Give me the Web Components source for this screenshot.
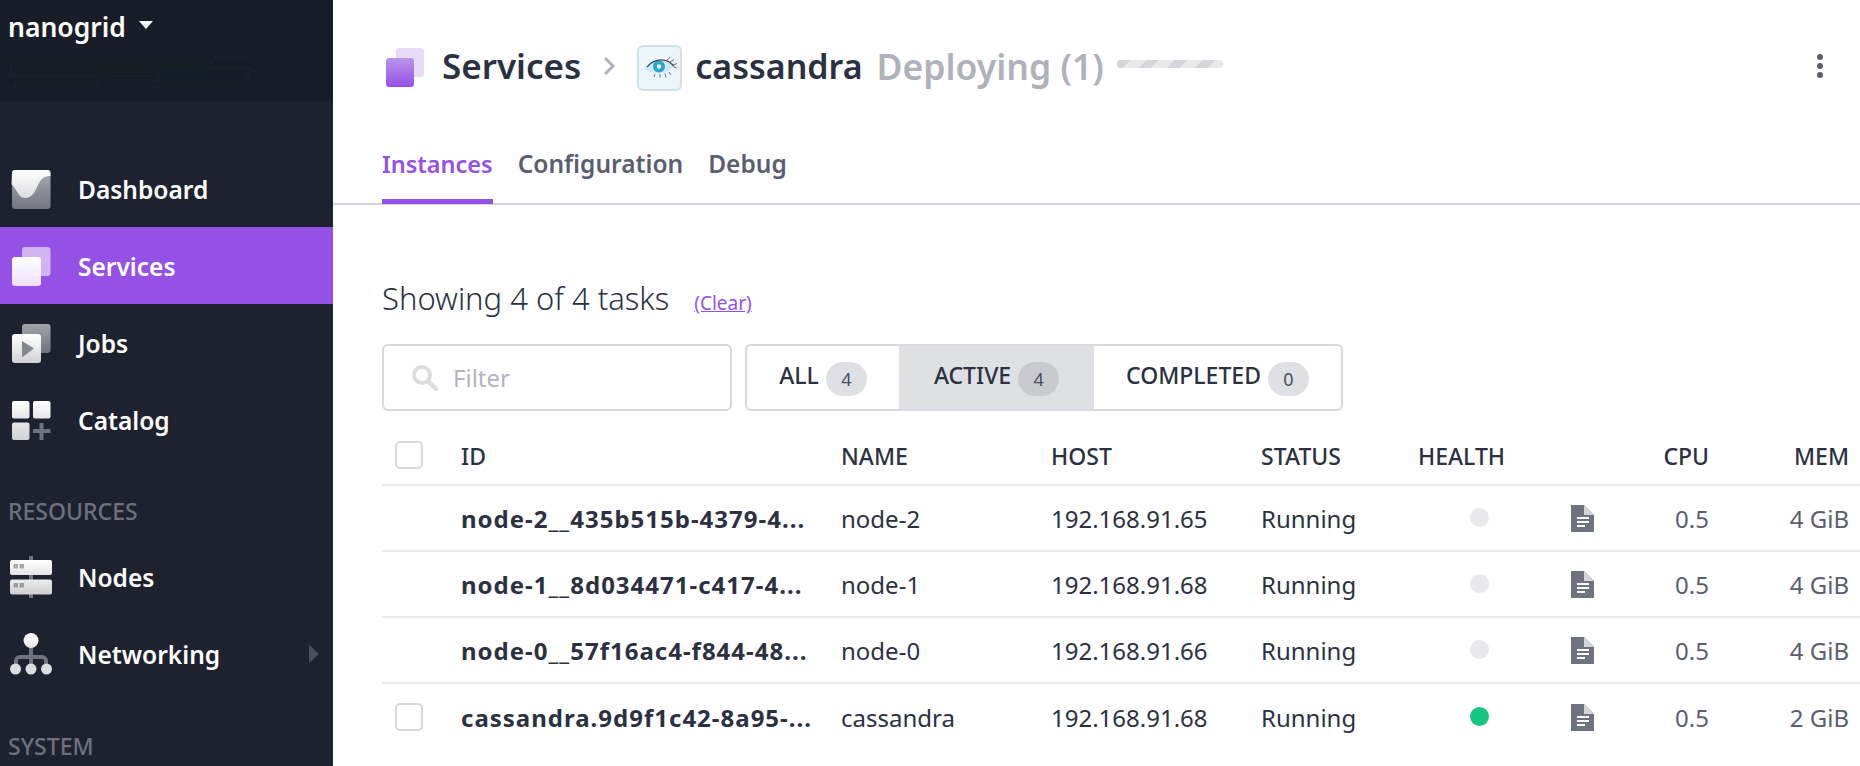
<!DOCTYPE html>
<html>
<head>
<meta charset="utf-8">
<title>Services</title>
<style>
  html, body { margin: 0; height: 100%; overflow: hidden; background: #fff; }
  body { font-family: "Noto Sans", "Open Sans", sans-serif; color: #2c3142; }
</style>
</head>
<body>
<app-shell>
  <side-nav slot="nav"></side-nav>
  <service-page></service-page>
</app-shell>

<script>
// icons are plain svg strings, all on a 42x42 box
const defs = (id, a, b) => `<defs><linearGradient id="${id}" x1="0" y1="0" x2="0" y2="1"><stop offset="0" stop-color="${a}"/><stop offset="1" stop-color="${b}"/></linearGradient></defs>`;

const ICONS = {
  dashboard: `<svg width="42" height="42" viewBox="0 0 42 42">${defs('d1', '#a9abb0', '#73767f')}${defs('d2', '#ffffff', '#dcdde0')}
    <rect x="2" y="2" width="38.500" height="39" rx="3" fill="url(#d1)"/>
    <path d="M2 5a3 3 0 0 1 3-3h32.500a3 3 0 0 1 3 3v3c-6 0-9 2-12 8-3 7-6 14-13.500 14-5 0-7-5-9-8-2-3-3-5-4.500-5.500z" fill="url(#d2)"/></svg>`,
  services: `<svg width="42" height="42" viewBox="0 0 42 42">${defs('s1', '#ffffff', '#eddffb')}
    <rect x="12" y="2" width="28.500" height="29" rx="3" fill="#d2b4f2"/>
    <rect x="2" y="12" width="29" height="29" rx="3" fill="url(#s1)"/></svg>`,
  jobs: `<svg width="42" height="42" viewBox="0 0 42 42">${defs('j1', '#a2a4aa', '#6f727c')}${defs('j2', '#ffffff', '#d2d3d6')}
    <rect x="12" y="2" width="28.500" height="29" rx="3" fill="url(#j1)"/>
    <rect x="2" y="12" width="29" height="29" rx="3" fill="url(#j2)"/>
    <path d="M12 19l12 7.500-12 9z" fill="#85878f"/></svg>`,
  catalog: `<svg width="42" height="42" viewBox="0 0 42 42">${defs('c1', '#ffffff', '#e6e6e9')}${defs('c2', '#e8e8ea', '#cfd0d3')}
    <rect x="2" y="2" width="17.500" height="17.500" rx="2" fill="url(#c1)"/>
    <rect x="23" y="2" width="17.500" height="17.500" rx="2" fill="url(#c1)"/>
    <rect x="2" y="23.500" width="17.500" height="17.500" rx="2" fill="url(#c2)"/>
    <path d="M29.500 24h4v6h7v4h-7v7h-4v-7h-6.500v-4h6.500z" fill="#70737e"/></svg>`,
  nodes: `<svg width="42" height="42" viewBox="0 0 42 42">${defs('n1', '#ffffff', '#e4e4e7')}${defs('n2', '#ececee', '#cfd0d3')}
    <rect x="19" y="0" width="4" height="42" fill="#70737e"/>
    <rect x="0" y="4" width="42" height="15" rx="2" fill="url(#n1)"/>
    <rect x="0" y="23.500" width="42" height="15" rx="2" fill="url(#n2)"/>
    <rect x="3.500" y="8" width="4.500" height="4.500" fill="#a8a9ae"/><rect x="9.500" y="8" width="4.500" height="4.500" fill="#a8a9ae"/>
    <rect x="3.500" y="27" width="4.500" height="4.500" fill="#9c9da3"/><rect x="9.500" y="27" width="4.500" height="4.500" fill="#9c9da3"/></svg>`,
  networking: `<svg width="42" height="42" viewBox="0 0 42 42">${defs('w1', '#ffffff', '#e7e7ea')}
    <path d="M6 33v-5a4 4 0 0 1 4-4h22a4 4 0 0 1 4 4v5M21 12v21" fill="none" stroke="#70737e" stroke-width="4"/>
    <circle cx="21" cy="7.500" r="7.500" fill="url(#w1)"/>
    <circle cx="5.500" cy="36" r="5.500" fill="#dcdde0"/><circle cx="21" cy="36" r="5.500" fill="#dcdde0"/><circle cx="36.500" cy="36" r="5.500" fill="#dcdde0"/></svg>`
};

class AppShell extends HTMLElement {
  constructor() {
    super();
    this.attachShadow({ mode: 'open' });
    this.shadowRoot.innerHTML = `
      <style>
        :host { display: flex; width: 100%; height: 766px; overflow: hidden; }
        ::slotted(side-nav) { flex: 0 0 333px; }
        .main { flex: 1; min-width: 0; display: flex; }
      </style>
      <slot name="nav"></slot>
      <div class="main"><slot></slot></div>
    `;
  }
}

class SideNav extends HTMLElement {
  constructor() {
    super();
    this.attachShadow({ mode: 'open' });
  }
  connectedCallback() {
    this.shadowRoot.innerHTML = `
      <style>
        :host { display: block; background: #1e222f; height: 766px; overflow: hidden; color: #fff; }
        .top { height: 101px; background: #191d28; box-sizing: border-box; padding: 8px 8px 0; }
        .cluster { display: flex; align-items: center; gap: 13px; font-size: 26.500px; font-weight: 600; line-height: 38px; height: 38px; }
        .caret { width: 0; height: 0; border: 7px solid transparent; border-top: 8px solid #fff; border-bottom: 0; margin-top: -4px; }
        .smudge { display: block; margin-top: 6px; }
        .items { padding-top: 49px; }
        .label { font-size: 23px; font-weight: 500; color: #6d717e; line-height: 30px; padding-left: 8px; }
        .label.res { margin-top: 38px; margin-bottom: 12px; }
        .label.sys { margin-top: 39px; }
      </style>
      <div class="top">
        <div class="cluster"><span>nanogrid</span><span class="caret"></span></div>
        <svg class="smudge" width="260" height="36" viewBox="0 0 260 36" aria-hidden="true">
          <defs><filter id="b"><feGaussianBlur stdDeviation="3.500"/></filter></defs>
          <g filter="url(#b)" fill="#171b24"><rect x="2" y="6" width="200" height="6"/><rect x="4" y="16" width="240" height="6"/><rect x="4" y="26" width="90" height="4"/><rect x="150" y="24" width="90" height="6"/></g>
        </svg>
      </div>
      <div class="items">
        <nav-item icon="dashboard">Dashboard</nav-item>
        <nav-item icon="services" active>Services</nav-item>
        <nav-item icon="jobs">Jobs</nav-item>
        <nav-item icon="catalog">Catalog</nav-item>
        <div class="label res">RESOURCES</div>
        <nav-item icon="nodes">Nodes</nav-item>
        <nav-item icon="networking" more>Networking</nav-item>
        <div class="label sys">SYSTEM</div>
      </div>
    `;
  }
}

class NavItem extends HTMLElement {
  constructor() {
    super();
    this.attachShadow({ mode: 'open' });
  }
  connectedCallback() {
    this.shadowRoot.innerHTML = `
      <style>
        :host { display: flex; align-items: center; height: 77px; padding-left: 10px; font-size: 24.500px; font-weight: 600; color: #fff; position: relative; }
        :host([active]) { background: #9551e6; }
        .ic { width: 42px; height: 42px; margin-right: 26px; }
        .tx { padding-top: 2px; }
        svg { display: block; }
        .more { position: absolute; right: 14px; top: 30px; width: 0; height: 0; border: 9px solid transparent; border-left: 10px solid #4b4f5c; border-right: 0; }
      </style>
      <span class="ic">${ICONS[this.getAttribute('icon')]}</span>
      <span class="tx"><slot></slot></span>
      ${this.hasAttribute('more') ? '<span class="more"></span>' : ''}
    `;
  }
}

class ServicePage extends HTMLElement {
  constructor() {
    super();
    this.attachShadow({ mode: 'open' });
  }
  connectedCallback() {
    this.shadowRoot.innerHTML = `
      <style>
        :host { display: block; flex: 1; min-width: 0; }
        .crumbs { display: flex; align-items: center; height: 46px; margin: 45px 0 0 49px; padding-right: 37px; font-size: 35px; font-weight: 600; color: #2c3142; }
        .crumbs svg { display: block; }
        .txt { margin-top: -5px; }
        .name { font-size: 34px; }
        .crumb-ic { margin: 0 16px 0 4px; }
        .chev { margin: -4px 21px 0 22px; }
        .logo { width: 45px; height: 46px; box-sizing: border-box; border: 2px solid #d5e1e7; border-radius: 6px; background: #ebf6fb; margin-right: 13px; display: flex; align-items: center; justify-content: center; }
        .state { font-size: 35.500px; color: #b0b1ba; margin-left: 14px; }
        .bar { width: 106px; height: 8px; margin: -8px 0 0 13px; border-radius: 4px; background: repeating-linear-gradient(-45deg, #e9e9ec 0 11px, #d6d6da 11px 20px); }
        .kebab { margin-left: auto; margin-top: -4px; display: flex; flex-direction: column; gap: 3px; }
        .kebab i { width: 6px; height: 6px; border-radius: 50%; background: #5a5e6c; display: block; }
        .tabs { display: flex; height: 75px; box-sizing: border-box; margin-top: 39px; padding: 0 0 0 49px; gap: 25px; border-bottom: 2px solid #d4d3db; font-size: 24.500px; font-weight: 600; color: #5a5e6e; line-height: 68px; }
        .tabs span.on { font-size: 23.500px; color: #9551e6; border-bottom: 5px solid #9551e6; height: 74px; box-sizing: border-box; margin-bottom: -1px; }
        .body { padding-left: 49px; }
        .count { display: flex; align-items: baseline; margin-top: 73px; height: 42px; line-height: 40px; font-size: 31px; color: #2c3142; font-weight: 300; }
        .count a { font-size: 19px; font-weight: 400; color: #9551e6; text-decoration: underline; margin-left: 25px; }
        .tools { display: flex; gap: 13px; margin-top: 24px; }
      </style>
      <div class="crumbs">
        <svg class="crumb-ic" width="40" height="40" viewBox="0 0 40 40">
          <defs><linearGradient id="hs" x1="0" y1="0" x2="0" y2="1"><stop offset="0" stop-color="#bb95ea"/><stop offset="1" stop-color="#9450e5"/></linearGradient></defs>
          <rect x="10" y="0" width="28" height="29" rx="3" fill="#e8dbf8"/>
          <rect x="0" y="10" width="28" height="29" rx="3" fill="url(#hs)"/>
        </svg>
        <span class="txt">Services</span>
        <svg class="chev" width="13" height="20" viewBox="0 0 13 20"><path d="M2 2l8 8-8 8" fill="none" stroke="#b0b1ba" stroke-width="3"/></svg>
        <span class="logo"><svg width="36" height="24" viewBox="0 0 36 24">
          <path d="M2 13C8 6 15 3 23 5c4 1 7 3 8 5-3 5-8 7-13 7-6 0-12-1-16-4z" fill="#cbe8f5"/>
          <circle cx="17" cy="10.500" r="6" fill="#2aa4d0"/><circle cx="17" cy="10.500" r="2.200" fill="#e8f6fc"/>
          <path d="M5 11C10 5 17 3 24 4.500c3 1 6 3 8 6" fill="none" stroke="#3a444b" stroke-width="1.200"/>
          <path d="M25 4l3-2.500M28 6l4-2.500M31 9l4-1.500M32 11l3 1M27 16l2 3M23 17.500l1 4M18 18v3.500M13 18l-1 3" stroke="#4a545b" stroke-width=".8"/>
        </svg></span>
        <span class="txt name">cassandra</span>
        <span class="txt state">Deploying (1)</span>
        <span class="bar"></span>
        <span class="kebab"><i></i><i></i><i></i></span>
      </div>
      <div class="tabs"><span class="on">Instances</span><span>Configuration</span><span>Debug</span></div>
      <div class="body">
        <div class="count">Showing 4 of 4 tasks<a>(Clear)</a></div>
        <div class="tools">
          <filter-box></filter-box>
          <status-tabs></status-tabs>
        </div>
        <task-table></task-table>
      </div>
    `;
  }
}

class FilterBox extends HTMLElement {
  constructor() {
    super();
    this.attachShadow({ mode: 'open' });
    this.shadowRoot.innerHTML = `
      <style>
        :host { display: flex; align-items: center; box-sizing: border-box; width: 350px; height: 67px; border: 2px solid #d8d8de; border-radius: 6px; padding-left: 27px; font-size: 24px; color: #b3b4bc; gap: 14px; }
      </style>
      <svg width="28" height="28" viewBox="0 0 28 28"><circle cx="11" cy="11" r="8" fill="none" stroke="#dcdce1" stroke-width="4"/><path d="M17 17l8 8" stroke="#dcdce1" stroke-width="4.500" stroke-linecap="round"/></svg>
      <span>Filter</span>
    `;
  }
}

class StatusTabs extends HTMLElement {
  constructor() {
    super();
    this.attachShadow({ mode: 'open' });
    this.shadowRoot.innerHTML = `
      <style>
        :host { display: flex; box-sizing: border-box; width: 598px; height: 67px; border: 2px solid #d8d8de; border-radius: 6px; overflow: hidden; font-size: 23px; font-weight: 500; color: #2c3142; }
        .t { display: flex; align-items: center; justify-content: center; gap: 7px; }
        .t b { font-weight: 500; margin-top: -5px; }
        .a { width: 152px; }
        .b { width: 195px; background: #dfe0e4; }
        .c { flex: 1; }
        .n { width: 41px; height: 34px; border-radius: 17px; background: #dfe0e4; display: flex; align-items: center; justify-content: center; font-size: 18px; font-weight: 400; color: #4a4e5c; margin-top: 3px; }
        .b .n { background: #c9cacd; }
      </style>
      <div class="t a"><b>ALL</b><span class="n">4</span></div>
      <div class="t b"><b>ACTIVE</b><span class="n">4</span></div>
      <div class="t c"><b>COMPLETED</b><span class="n">0</span></div>
    `;
  }
}

// shared column template for the header and rows
const COLS = '79px 380px 210px 210px 157px 153px 60px 78px 140px 11px';

class TaskTable extends HTMLElement {
  constructor() {
    super();
    this.attachShadow({ mode: 'open' });
  }
  connectedCallback() {
    this.shadowRoot.innerHTML = `
      <style>
        :host { display: block; }
        .head { display: grid; grid-template-columns: ${COLS}; align-items: center; height: 75px; font-weight: 500; color: #2c3142; font-size: 23px; border-bottom: 2px solid #e9e9ed; box-sizing: border-box; }
        .lab { padding-top: 17px; }
        .box { display: block; width: 28px; height: 28px; box-sizing: border-box; border: 2px solid #d8d8de; border-radius: 5px; margin: 15px 0 0 13px; }
        .r { text-align: right; }
      </style>
      <div class="head">
        <span><span class="box"></span></span><span class="lab">ID</span><span class="lab">NAME</span><span class="lab">HOST</span><span class="lab">STATUS</span><span class="lab">HEALTH</span><span></span><span class="lab r">CPU</span><span class="lab r">MEM</span><span></span>
      </div>
      <task-row tid="node-2__435b515b-4379-4..." name="node-2" host="192.168.91.65" mem="4 GiB"></task-row>
      <task-row tid="node-1__8d034471-c417-4..." name="node-1" host="192.168.91.68" mem="4 GiB"></task-row>
      <task-row tid="node-0__57f16ac4-f844-48..." name="node-0" host="192.168.91.66" mem="4 GiB"></task-row>
      <task-row tid="cassandra.9d9f1c42-8a95-..." name="cassandra" host="192.168.91.68" mem="2 GiB" healthy check></task-row>
    `;
  }
}

class TaskRow extends HTMLElement {
  constructor() {
    super();
    this.attachShadow({ mode: 'open' });
  }
  connectedCallback() {
    const a = n => this.getAttribute(n);
    this.shadowRoot.innerHTML = `
      <style>
        :host { display: grid; grid-template-columns: ${COLS}; align-items: center; height: 66px; box-sizing: border-box; border-bottom: 2px solid #e9e9ed; font-size: 24px; color: #2c3142; white-space: nowrap; }
        :host(:last-of-type) { border-bottom: 0; }
        .box { display: block; width: 28px; height: 28px; box-sizing: border-box; border: 2px solid #d8d8de; border-radius: 5px; margin-left: 13px; }
        .id { font-weight: 700; letter-spacing: 1px; overflow: hidden; }
        .dot { display: block; width: 19px; height: 19px; border-radius: 50%; background: #e9e9ec; margin: -1px 0 0 52px; }
        :host([healthy]) .dot { background: #13c682; }
        svg { display: block; }
        .r { text-align: right; color: #5a5e6e; }
      </style>
      <span>${this.hasAttribute('check') ? '<span class="box"></span>' : ''}</span>
      <span class="id">${a('tid')}</span>
      <span>${a('name')}</span>
      <span>${a('host')}</span>
      <span>Running</span>
      <span><span class="dot"></span></span>
      <span><svg width="24" height="27" viewBox="0 0 24 27">
        <path d="M0 0h13l10 10v17H0z" fill="#6f7380"/><path d="M13 0l10 10H13z" fill="#d4d4d9"/>
        <path d="M6 13h12M6 17h12M6 21h8" stroke="#fff" stroke-width="1.800"/>
      </svg></span>
      <span class="r">0.5</span>
      <span class="r">${a('mem')}</span>
      <span></span>
    `;
  }
}

customElements.define('app-shell', AppShell);
customElements.define('side-nav', SideNav);
customElements.define('nav-item', NavItem);
customElements.define('service-page', ServicePage);
customElements.define('filter-box', FilterBox);
customElements.define('status-tabs', StatusTabs);
customElements.define('task-table', TaskTable);
customElements.define('task-row', TaskRow);
</script>
</body>
</html>
